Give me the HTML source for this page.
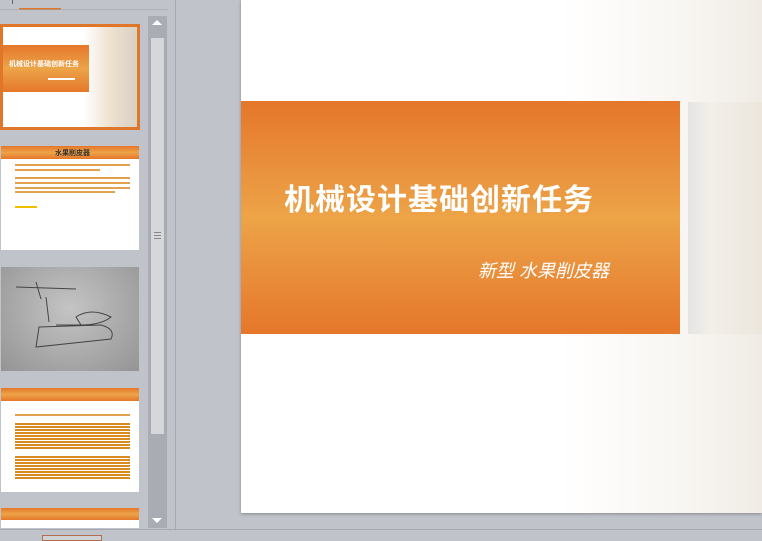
<!DOCTYPE html>
<html><head><meta charset="utf-8"><style>
*{margin:0;padding:0;box-sizing:border-box}
body{width:762px;height:539px;overflow:hidden;background:#c0c3ca;position:relative;font-family:"Liberation Sans","Noto Sans CJK SC",sans-serif}
.a{position:absolute}
.band{background:linear-gradient(180deg,#e5772a 0%,#ea9640 35%,#eda447 50%,#ea9640 65%,#e5772a 100%)}
.line{position:absolute;height:2px;background:#d98a20;opacity:.8}
</style></head><body>
<div class="a" style="left:19px;top:8px;width:42px;height:2px;background:#e0762a"></div>
<div class="a" style="left:0;top:9px;width:168px;height:1px;background:#a0a3aa;opacity:.6"></div>
<div class="a" style="left:12px;top:0;width:1px;height:4px;background:#666"></div>
<div class="a" style="left:175px;top:0;width:1px;height:530px;background:#a4a7ae"></div>
<div class="a" style="left:148px;top:16px;width:19px;height:512px;background:#a9acb3"></div>
<div class="a" style="left:151px;top:38px;width:13px;height:128px;background:#d5d7db"></div>
<div class="a" style="left:151px;top:166px;width:13px;height:268px;background:#d5d7db"></div>
<div class="a" style="left:152px;top:20px;width:0;height:0;border-left:5px solid transparent;border-right:5px solid transparent;border-bottom:5px solid #fff"></div>
<div class="a" style="left:152px;top:518px;width:0;height:0;border-left:5px solid transparent;border-right:5px solid transparent;border-top:5px solid #fff"></div>
<div class="a" style="left:154px;top:232px;width:7px;height:7px;border-top:1px solid #888;border-bottom:1px solid #888"><div style="margin-top:2px;height:1px;background:#888"></div></div>
<div class="a" style="left:0;top:24px;width:140px;height:106px;background:#e0762a"></div>
<div class="a" style="left:3px;top:27px;width:134px;height:100px;background:linear-gradient(90deg,#fff 60%,#eee2d0 80%,#d8d0c4)"></div>
<div class="a band" style="left:3px;top:45px;width:86px;height:47px"></div>
<div class="a" style="left:9px;top:59px;font-size:7px;color:#fff;font-weight:bold">机械设计基础创新任务</div>
<div class="a" style="left:48px;top:78px;width:27px;height:2px;background:#fff"></div>
<div class="a" style="left:1px;top:146px;width:138px;height:104px;background:#fff"></div>
<div class="a band" style="left:1px;top:146px;width:138px;height:13px"></div>
<div class="a" style="left:55px;top:148px;font-size:7px;color:#333;font-weight:bold">水果削皮器</div>
<div class="line" style="left:15px;top:164px;width:115px"></div><div class="line" style="left:15px;top:169px;width:85px"></div>
<div class="line" style="left:15px;top:177px;width:115px"></div><div class="line" style="left:15px;top:182px;width:115px"></div><div class="line" style="left:15px;top:187px;width:115px"></div><div class="line" style="left:15px;top:191px;width:100px"></div>
<div class="a" style="left:15px;top:206px;width:22px;height:2px;background:#f0c000"></div>
<div class="a" style="left:1px;top:267px;width:138px;height:104px;background:radial-gradient(ellipse at 50% 40%,#c4c4c4,#949494)"></div>
<svg class="a" style="left:1px;top:267px" width="138" height="104"><g fill="none" stroke="#444" stroke-width="1"><path d="M15 20 L75 22 M35 15 L40 32 M45 30 L48 55 M38 60 L100 58 Q115 62 110 72 L35 80 Z M75 50 Q90 40 110 50 Q100 58 80 58Z M55 58 L80 58"/></g></svg>
<div class="a" style="left:1px;top:388px;width:138px;height:104px;background:#fff"></div>
<div class="a band" style="left:1px;top:388px;width:138px;height:13px"></div>
<div class="line" style="left:15px;top:414px;width:115px"></div>
<div class="a" style="left:15px;top:423px;width:115px;height:26px;background:repeating-linear-gradient(180deg,#d98a20 0 2px,#fff 2px 3px)"></div>
<div class="a" style="left:15px;top:456px;width:115px;height:24px;background:repeating-linear-gradient(180deg,#d98a20 0 2px,#fff 2px 3px)"></div>
<div class="a" style="left:1px;top:508px;width:138px;height:20px;background:#fff"></div>
<div class="a band" style="left:1px;top:508px;width:138px;height:12px"></div>
<div class="a" style="left:0;top:529px;width:762px;height:1px;background:#a4a7ae"></div>
<div class="a" style="left:42px;top:535px;width:60px;height:6px;border:1px solid #b07050;background:#d0d2d6"></div>
<div class="a" style="left:241px;top:0;width:521px;height:513px;background:#fff;box-shadow:0 1px 3px rgba(0,0,0,.3)"></div>
<div class="a" style="left:560px;top:0;width:202px;height:513px;background:linear-gradient(90deg,rgba(255,255,255,1) 0%,rgba(244,240,234,.6) 60%,rgba(236,230,222,.8) 100%)"></div>
<div class="a" style="left:688px;top:102px;width:74px;height:232px;background:linear-gradient(90deg,#e4e4e4,#f2efe9 30%,#ece6dc)"></div>
<div class="a band" style="left:241px;top:101px;width:439px;height:233px"></div>
<div class="a" style="left:284px;top:175px;font-size:30px;font-weight:bold;color:#fff;letter-spacing:1px">机械设计基础创新任务</div>
<div class="a" style="left:478px;top:257px;font-size:18px;font-style:italic;color:#fff">新型 水果削皮器</div>
</body></html>
